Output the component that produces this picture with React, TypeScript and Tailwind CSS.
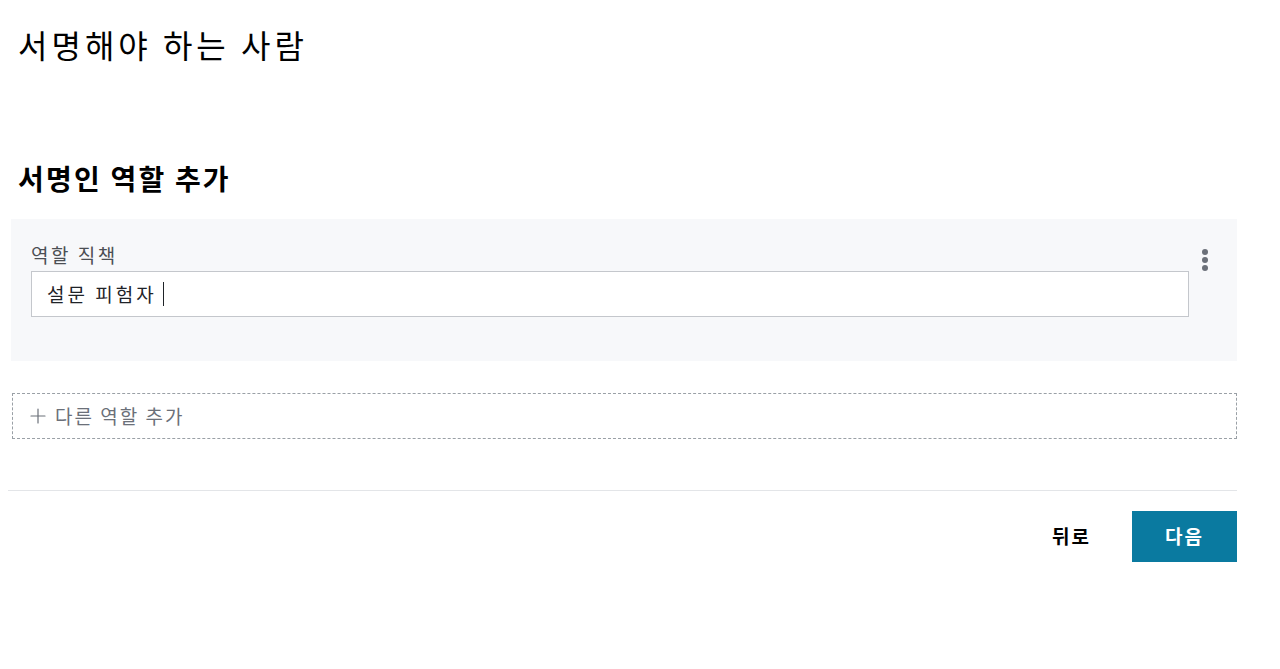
import { Plus } from 'lucide-react';

export default function App() {
  return (
    <div className="min-h-screen bg-white font-['Noto_Sans_CJK_KR','Noto_Sans',sans-serif] text-[#1f2328]">
      <div className="ml-[8px] w-[1229px] pt-[20px]">
        <h1 className="pl-[10px] text-[32px] leading-[48px] font-normal tracking-[4px] text-black">
          서명해야 하는 사람
        </h1>

        <h2 className="mt-[90px] pl-[10px] text-[28px] leading-[40px] font-bold tracking-[2.2px] text-black">
          서명인 역할 추가
        </h2>

        <section className="mt-[21px] ml-[3px] flex items-start gap-[11px] bg-[#f7f8fa] pt-[22px] pr-[27px] pb-[44px] pl-[20px]">
          <div className="flex-1">
            <label className="block text-[19px] leading-[28px] tracking-[2.5px] text-[#4b4f54]">역할 직책</label>
            <div className="mt-[2px] flex h-[46px] items-center border border-[#c4c7cc] bg-white px-[15px]">
              <span className="text-[19px] tracking-[3px] text-[#1f2328]">설문 피험자</span>
              <span className="ml-[6px] inline-block h-[24px] w-[1.5px] bg-[#1f2328]" />
            </div>
          </div>
          <button className="mt-[8px] flex w-[10px] flex-col items-center gap-[2px]">
            <span className="h-[6px] w-[6px] rounded-full bg-[#6b7079]" />
            <span className="h-[6px] w-[6px] rounded-full bg-[#6b7079]" />
            <span className="h-[6px] w-[6px] rounded-full bg-[#6b7079]" />
          </button>
        </section>

        <button className="mt-[32px] ml-[4px] flex h-[46px] w-[1225px] items-center gap-[5px] border border-dashed border-[#9aa0a6] pl-[13px] pr-[16px] text-[19px] tracking-[2px] text-[#6b7079]">
          <Plus className="h-[24px] w-[24px]" strokeWidth={1.2} />
          다른 역할 추가
        </button>

        <div className="mt-[51px] h-px bg-[#e3e5e8]" />

        <div className="mt-[20px] flex items-center justify-end gap-[22px]">
          <button className="h-[51px] px-[19px] text-[19px] font-bold tracking-[2px] text-black">뒤로</button>
          <button className="h-[51px] w-[105px] bg-[#0a7aa0] text-[19px] font-bold tracking-[2px] text-white">다음</button>
        </div>
      </div>
    </div>
  );
}
